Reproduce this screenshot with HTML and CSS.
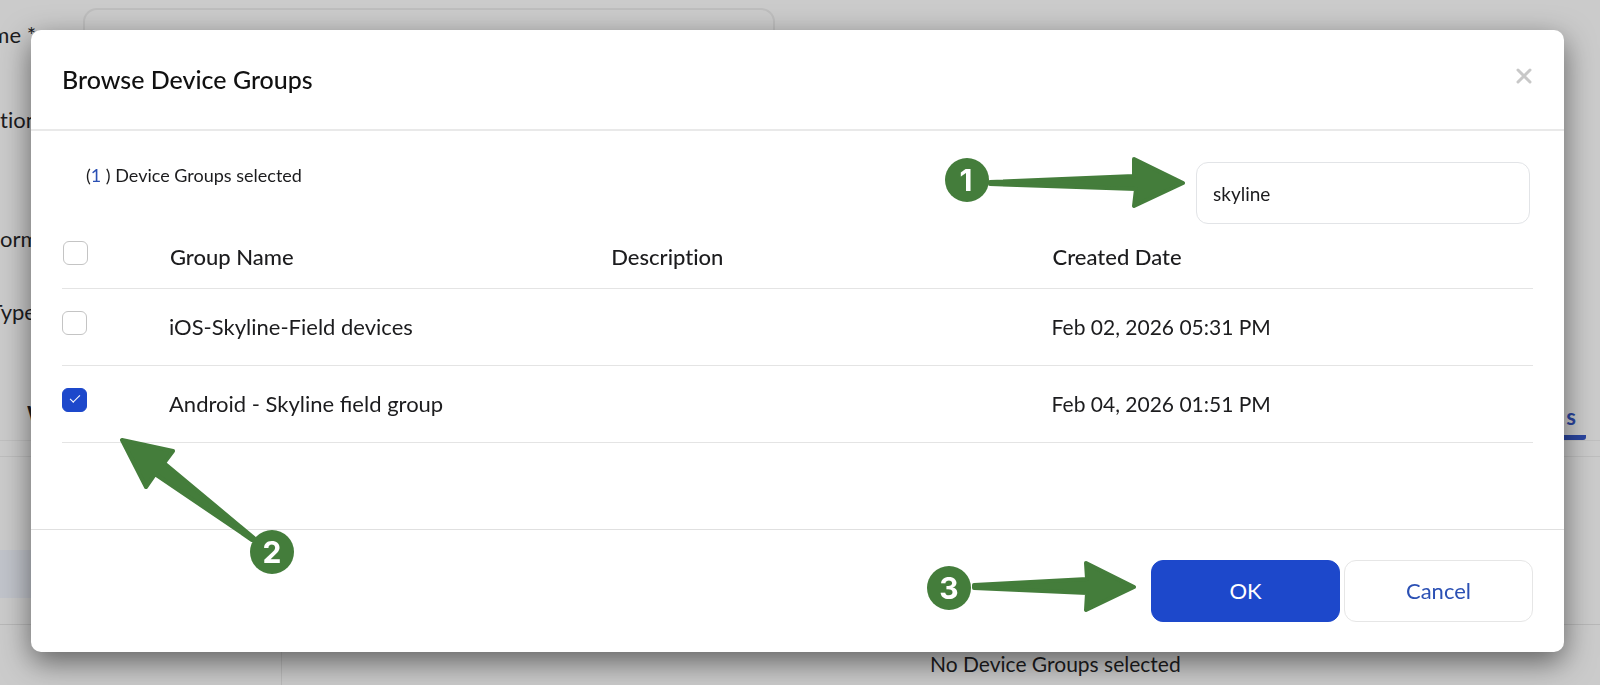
FILE: index.html
```html
<!DOCTYPE html>
<html lang="en">
<head>
  <meta charset="UTF-8" />
  <meta name="viewport" content="width=device-width, initial-scale=1.0"/>
  <title>Browse Device Groups</title>
  <link rel="stylesheet" href="styles.css">
</head>
<body>

  <!-- Page under the dialog, scrolled to the right -->
  <div class="page">
    <div class="field field-name">
      <label class="label-end" for="name">me *</label>
      <input type="text" id="name">
    </div>
    <div class="field field-description"><span>tion</span></div>
    <div class="field field-platform"><span>orm</span></div>
    <div class="field field-type"><span class="label-end">Type</span></div>

    <nav class="tabs">
      <a class="tab" href="#">W</a>
      <a class="tab active" href="#">s</a>
    </nav>

    <div class="panel">
      <div class="panel-row"></div>
    </div>
    <div class="panel-bottom">
      <div class="side"></div>
      <p class="empty">No Device Groups selected</p>
    </div>
  </div>

  <div class="overlay">
    <section class="modal" role="dialog" aria-labelledby="title">
      <header class="modal-header">
        <h1 id="title">Browse Device Groups</h1>
        <button class="close" type="button" aria-label="Close">
          <svg width="16" height="16" viewBox="0 0 16 16"><path d="M2 2L14 14M14 2L2 14"/></svg>
        </button>
      </header>

      <div class="modal-body">
        <div class="toolbar">
          <p class="count">(<a href="#">1</a> ) Device Groups selected</p>
          <div class="search">
            <svg class="callout callout-search" width="244" height="56" viewBox="0 0 244 56">
              <path d="M46 27L190 21V4L239 28L190 51L192 34L46 29Z"/>
              <circle cx="23" cy="25" r="22"/>
              <text x="22" y="36">1</text>
            </svg>
            <input type="text" value="skyline" aria-label="Search device groups">
          </div>
        </div>

        <table>
          <thead>
            <tr>
              <th class="check"><input type="checkbox" aria-label="Select all"></th>
              <th class="wide">Group Name</th>
              <th class="wide">Description</th>
              <th>Created Date</th>
            </tr>
          </thead>
          <tbody>
            <tr>
              <td class="check"><input type="checkbox" aria-label="iOS-Skyline-Field devices"></td>
              <td>iOS-Skyline-Field devices</td>
              <td></td>
              <td class="date">Feb 02, 2026 05:31 PM</td>
            </tr>
            <tr>
              <td class="check"><input type="checkbox" aria-label="Android - Skyline field group" checked></td>
              <td>Android - Skyline field group</td>
              <td></td>
              <td class="date">Feb 04, 2026 01:51 PM</td>
            </tr>
          </tbody>
        </table>
      </div>

      <footer class="modal-footer">
        <div class="confirm">
          <svg class="callout callout-ok" width="212" height="56" viewBox="0 0 212 56">
            <path d="M48 28L161 22L160 6L208 30L160 53L161 36L48 31Z"/>
            <circle cx="23" cy="31" r="22"/>
            <text x="23" y="42">3</text>
          </svg>
          <button class="btn btn-ok" type="button">OK</button>
        </div>
        <button class="btn btn-cancel" type="button">Cancel</button>
      </footer>

      <svg class="callout callout-check" width="190" height="150" viewBox="0 0 190 150">
        <path d="M12 10L63 21L54 33L144 108L142 110L45 44L36 57Z"/>
        <circle cx="162" cy="122" r="22"/>
        <text x="162" y="133">2</text>
      </svg>
    </section>
  </div>

</body>
</html>
```

FILE: styles.css
```css
* {
  box-sizing: border-box;
}

body {
  font-family: Lato, sans-serif;
  font-size: 22px;
  line-height: 28px;
  font-variant-ligatures: none;
  color: #1c1c1e;
  background: #cbcbcb;
  margin: 0;
  height: 100vh;
  overflow: hidden;
}

h1, p {
  margin: 0;
}

a {
  color: #2b50b4;
  text-decoration: none;
}

/* page behind */
.page {
  padding-top: 8px;
}
.field {
  display: flex;
}
.field span, .field label {
  width: 36px;
  flex: none;
  padding-top: 13px;
  white-space: nowrap;
}
.field .label-end {
  display: flex;
  justify-content: flex-end;
}
.field input {
  width: 692px;
  height: 62px;
  margin-left: 47px;
  border: 2px solid #bebebe;
  border-radius: 14px;
  background: none;
}
.field-name {
  height: 85px;
}
.field-description {
  height: 119px;
}
.field-platform {
  height: 73px;
}
.field-type {
  height: 73px;
}
.tabs {
  display: flex;
  justify-content: space-between;
  height: 83px;
  padding: 40px 14px 0 27px;
  border-bottom: 1px solid #c0c0c0;
}
.tab {
  height: 42px;
  padding-top: 3px;
  color: #1c1c1e;
  font-weight: bold;
}
.tab.active {
  color: #2b46a0;
  border-bottom: 5px solid #2b46a0;
  border-radius: 3px;
  padding: 5px 10px 0;
}
.panel {
  height: 169px;
  margin-top: 15px;
  padding-top: 93px;
  border-top: 1px solid #bebebe;
  border-bottom: 1px solid #b8b8b8;
}
.panel-row {
  width: 282px;
  height: 48px;
  background: #c1c4cb;
}
.panel-bottom {
  display: flex;
  height: 80px;
}
.side {
  width: 282px;
  border-right: 1px solid #bbb;
}
.empty {
  flex: 1;
  padding: 25px 0 0 648px;
  font-size: 21px;
}

/* dialog */
.overlay {
  position: fixed;
  inset: 0;
  padding: 30px 36px 0 31px;
}
.modal {
  position: relative;
  background: #fff;
  border-radius: 10px;
  box-shadow: 0 10px 30px rgba(0, 0, 0, 0.52);
}
.modal-header {
  display: flex;
  justify-content: space-between;
  align-items: flex-start;
  padding: 35px 31px;
  border-bottom: 2px solid #e9e9e9;
}
.modal-header h1 {
  font-size: 25px;
  line-height: 29px;
  font-weight: 500;
  color: #111;
}
.close {
  display: flex;
  padding: 3px 1px;
  border: 0;
  background: none;
}
.close svg {
  fill: none;
  stroke: #c8c8c8;
  stroke-width: 3;
  stroke-linecap: round;
}
.modal-body {
  padding: 31px 31px 86px;
}
.toolbar {
  display: flex;
  justify-content: space-between;
  padding: 0 3px 0 24px;
}
.count {
  font-size: 18px;
  line-height: 26px;
}
.search {
  position: relative;
}
.search input {
  display: block;
  width: 334px;
  height: 62px;
  padding: 0 16px;
  border: 1px solid #e2e4e7;
  border-radius: 12px;
  font: 19px Lato, sans-serif;
  color: #1c1c1e;
}

table {
  width: 100%;
  border-collapse: collapse;
  table-layout: fixed;
}
th, td {
  height: 77px;
  padding: 0 9px;
  border-bottom: 1px solid #e4e4e4;
  text-align: left;
  font-weight: 400;
}
th {
  height: 64px;
  padding: 2px 10px 0;
  font-weight: 500;
}
td {
  font-variant-ligatures: normal;
}
.date {
  font-size: 21px;
}
.check {
  width: 98px;
  padding: 0 0 8px;
}
th.check {
  padding: 0 0 6px 1px;
}
.wide {
  width: 30%;
}
input[type="checkbox"] {
  appearance: none;
  display: block;
  width: 25px;
  height: 24px;
  margin: 0;
  border: 1px solid #c4c4c4;
  border-radius: 6px;
  background: #fff;
}
input[type="checkbox"]:checked {
  display: grid;
  place-items: center;
  background: #1d48cb;
  border-color: #1d48cb;
}
input[type="checkbox"]:checked::after {
  content: "";
  width: 9px;
  height: 4px;
  margin-bottom: 4px;
  border: solid #fff;
  border-width: 0 0 1px 1px;
  transform: rotate(-45deg);
}

.modal-footer {
  display: flex;
  justify-content: flex-end;
  gap: 4px;
  padding: 30px 31px;
  border-top: 1px solid #e0e0e0;
}
.confirm {
  position: relative;
}
.btn {
  display: block;
  width: 189px;
  height: 62px;
  border: 1px solid #e6e6e6;
  border-radius: 12px;
  font: 22px Lato, sans-serif;
}
.btn-ok {
  background: #1d48cb;
  border-color: #1d48cb;
  color: #fff;
}
.btn-cancel {
  background: #fff;
  color: #2b50b4;
}

/* numbered arrows */
.callout {
  position: absolute;
  fill: #447d3b;
}
.callout path {
  stroke: #447d3b;
  stroke-width: 4;
  stroke-linejoin: round;
}
.callout text {
  fill: #fff;
  font: bold 30px Inter, sans-serif;
  text-anchor: middle;
}
.callout-search {
  right: 342px;
  top: -7px;
}
.callout-ok {
  right: 202px;
  top: -3px;
}
.callout-check {
  left: 79px;
  top: 400px;
}
```
